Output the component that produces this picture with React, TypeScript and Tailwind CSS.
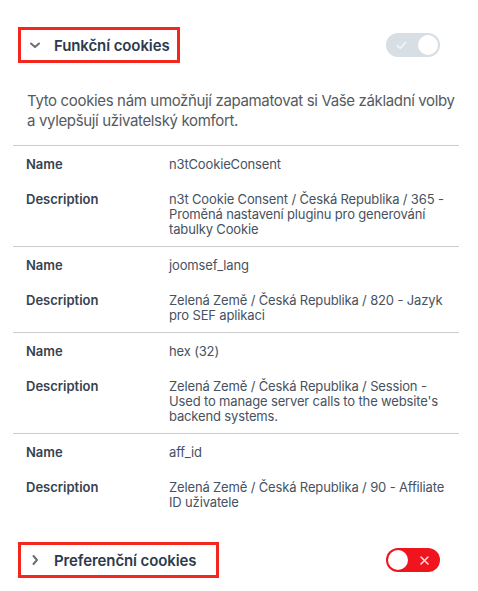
import React from "react";

type Cookie = { name: string; description: string };

const cookies: Cookie[] = [
  {
    name: "n3tCookieConsent",
    description:
      "n3t Cookie Consent / Česká Republika / 365 - Proměná nastavení pluginu pro generování tabulky Cookie",
  },
  {
    name: "joomsef_lang",
    description: "Zelená Země / Česká Republika / 820 - Jazyk pro SEF aplikaci",
  },
  {
    name: "hex (32)",
    description:
      "Zelená Země / Česká Republika / Session - Used to manage server calls to the website's backend systems.",
  },
  {
    name: "aff_id",
    description: "Zelená Země / Česká Republika / 90 - Affiliate ID uživatele",
  },
];

function Chevron({ open }: { open: boolean }) {
  return (
    <svg
      width="12"
      height="12"
      viewBox="0 0 12 12"
      className={open ? "" : "-rotate-90"}
      fill="none"
      stroke="#6b6f75"
      strokeWidth="2"
      strokeLinecap="round"
      strokeLinejoin="round"
    >
      <polyline points="2,4.5 6,8 10,4.5" />
    </svg>
  );
}

function Toggle({ on }: { on: boolean }) {
  if (on) {
    // disabled / always-on switch
    return (
      <div className="flex items-center justify-between w-[54px] h-[24px] rounded-full bg-[#d7dee4] pl-[10px] pr-[2px]">
        <svg width="11" height="9" viewBox="0 0 11 9" fill="none" stroke="#f1f4f6" strokeWidth="1.8" strokeLinecap="round" strokeLinejoin="round">
          <polyline points="1.5,4.8 4.2,7.3 9.5,1.7" />
        </svg>
        <div className="w-[20px] h-[20px] rounded-full bg-white" />
      </div>
    );
  }
  return (
    <div className="flex items-center justify-between w-[54px] h-[24px] rounded-full bg-[#f0141f] pl-[2px] pr-[11px]">
      <div className="w-[20px] h-[20px] rounded-full bg-white" />
      <svg width="9" height="9" viewBox="0 0 9 9" fill="none" stroke="#ffd9db" strokeWidth="1.6" strokeLinecap="round">
        <line x1="1" y1="1" x2="8" y2="8" />
        <line x1="8" y1="1" x2="1" y2="8" />
      </svg>
    </div>
  );
}

function SectionHeader({
  title,
  open,
  on,
  frameClass,
}: {
  title: string;
  open: boolean;
  on: boolean;
  frameClass: string;
}) {
  return (
    <div className="flex items-center justify-between pl-[5px] pr-[19px]">
      {/* red annotation frame round the heading */}
      <div className={`inline-flex items-center gap-[13px] h-[36px] border-[3px] border-[#f4271f] pl-[8px] ${frameClass}`}>
        <Chevron open={open} />
        <span className="text-[15px] font-semibold text-[#2c3a4e] leading-none tracking-[-0.1px]">
          {title}
        </span>
      </div>
      <Toggle on={on} />
    </div>
  );
}

export default function App() {
  return (
    <div className="w-[478px] min-h-[591px] bg-white font-['Inter',sans-serif]">
      <div className="pt-[27px] pl-[13px] pr-[19px]">
        <SectionHeader title="Funkční cookies" open on frameClass="pr-[7px]" />

        <p className="mt-[28px] pl-[14px] text-[15px] leading-[20px] tracking-[-0.35px] text-[#555a60]">
          Tyto cookies nám umožňují zapamatovat si Vaše základní volby a vylepšují uživatelský komfort.
        </p>

        <div className="mt-[14px]">
          {cookies.map((c) => (
            <div key={c.name} className="border-t border-[#cccccc] text-[13px] leading-[15px]">
              <div className="grid grid-cols-[156px_1fr] pt-[11px] pb-[10px]">
                <div className="pl-[13px] font-semibold text-[#36424f]">Name</div>
                <div className="pr-[8px] text-[#465261] tracking-[-0.15px]">{c.name}</div>
              </div>
              <div className="grid grid-cols-[156px_1fr] pt-[10px] pb-[9px]">
                <div className="pl-[13px] font-semibold text-[#36424f]">Description</div>
                <div className="pr-[8px] text-[#465261] tracking-[-0.15px]">{c.description}</div>
              </div>
            </div>
          ))}
        </div>

        <div className="mt-[23px]">
          <SectionHeader title="Preferenční cookies" open={false} on={false} frameClass="pr-[20px]" />
        </div>
      </div>
    </div>
  );
}
